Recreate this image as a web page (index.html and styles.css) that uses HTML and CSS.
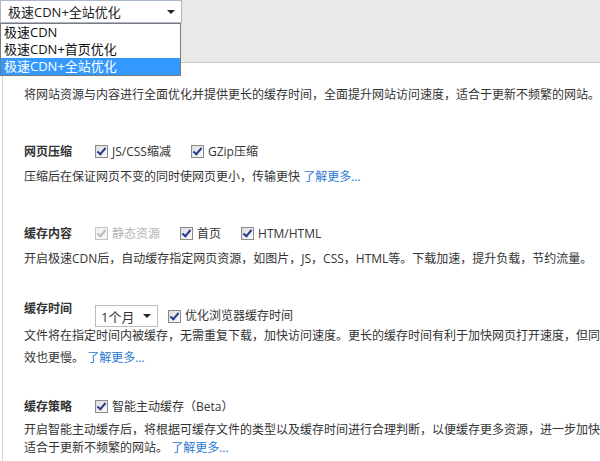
FILE: index.html
```html
<!DOCTYPE html>
<html lang="zh-CN">
<head>
    <meta charset="UTF-8">
    <title>极速CDN设置</title>
    <link rel="stylesheet" href="styles.css">
</head>
<body>
    <div class="topbar">
        <div class="select main-select">
            <span>极速CDN+全站优化</span>
            <span class="arrow"></span>
        </div>
        <ul class="dropdown">
            <li>极速CDN</li>
            <li>极速CDN+首页优化</li>
            <li class="active">极速CDN+全站优化</li>
        </ul>
    </div>

    <div class="content">
        <p class="intro">将网站资源与内容进行全面优化并提供更长的缓存时间，全面提升网站访问速度，适合于更新不频繁的网站。</p>

        <div class="section s-gzip">
            <div class="row">
                <span class="label">网页压缩</span>
                <span class="cb"></span><span class="opt">JS/CSS缩减</span>
                <span class="cb"></span><span class="opt">GZip压缩</span>
            </div>
            <p class="desc">压缩后在保证网页不变的同时使网页更小，传输更快 <a href="#">了解更多...</a></p>
        </div>

        <div class="section s-content">
            <div class="row">
                <span class="label">缓存内容</span>
                <span class="cb disabled"></span><span class="opt disabled">静态资源</span>
                <span class="cb"></span><span class="opt">首页</span>
                <span class="cb"></span><span class="opt">HTM/HTML</span>
            </div>
            <p class="desc">开启极速CDN后，自动缓存指定网页资源，如图片，JS，CSS，HTML等。下载加速，提升负载，节约流量。</p>
        </div>

        <div class="section s-time">
            <div class="row row-top">
                <span class="label">缓存时间</span>
                <div class="select small-select">
                    <span>1个月</span>
                    <span class="arrow"></span>
                </div>
                <span class="cb"></span><span class="opt">优化浏览器缓存时间</span>
            </div>
            <p class="desc tall">文件将在指定时间内被缓存，无需重复下载，加快访问速度。更长的缓存时间有利于加快网页打开速度，但同时更新生<br>效也更慢。 <a href="#">了解更多...</a></p>
        </div>

        <div class="section s-policy">
            <div class="row">
                <span class="label">缓存策略</span>
                <span class="cb"></span><span class="opt">智能主动缓存（Beta）</span>
            </div>
            <p class="desc short">开启智能主动缓存后，将根据可缓存文件的类型以及缓存时间进行合理判断，以便缓存更多资源，进一步加快网站访问速度，<br>适合于更新不频繁的网站。 <a href="#">了解更多...</a></p>
        </div>
    </div>
</body>
</html>
```

FILE: styles.css
```css
body {
    margin: 0;
    width: 600px;
    height: 461px;
    overflow: hidden;
    background: #fff;
    font-family: "Open Sans", "Noto Sans CJK SC", sans-serif;
    font-size: 12px;
    color: #333;
}

p {
    margin: 0;
    white-space: nowrap;
}

a {
    color: #2a78d2;
    text-decoration: none;
}

/* Top bar with dropdown */
.topbar {
    position: relative;
    height: 62px;
    background: #e9e9e9;
    border-bottom: 1px solid #c9c9c9;
}

.select {
    display: flex;
    align-items: center;
    justify-content: space-between;
    box-sizing: border-box;
    background: #fff;
    border: 1px solid #a9b7c9;
}

.main-select {
    width: 182px;
    height: 23px;
    padding: 0 6px 0 7px;
    font-size: 13px;
    color: #222;
}

.arrow {
    width: 0;
    height: 0;
    border-left: 4px solid transparent;
    border-right: 4px solid transparent;
    border-top: 4px solid #222;
}

.dropdown {
    position: absolute;
    top: 23px;
    left: 0;
    width: 181px;
    margin: 0;
    padding: 0;
    list-style: none;
    background: #fff;
    border: 1px solid #7a7a7a;
    box-sizing: border-box;
    font-size: 13px;
    color: #111;
}

.dropdown li {
    height: 17px;
    line-height: 17px;
    padding-left: 3px;
    overflow: hidden;
}

.dropdown li.active {
    background: #3399ff;
    color: #fff;
}

/* Content */
.content {
    margin-left: 2px;
    padding-left: 21px;
    border-left: 1px solid #d6d6d6;
    height: 400px;
}

.intro {
    line-height: 20px;
    padding-top: 22px;
}

.section {
    margin-top: 36px;
}

.s-time {
    margin-top: 30px;
}

.s-policy {
    margin-top: 27px;
}

.row {
    display: flex;
    align-items: center;
    height: 20px;
}

.row-top {
    align-items: flex-start;
    height: 26px;
}

.row-top .label {
    line-height: 20px;
}

.label {
    width: 71px;
    font-weight: bold;
    color: #333;
}

.opt {
    margin: 0 20px 0 4px;
    color: #333;
}

.opt.disabled {
    color: #b4b4b4;
}

.cb {
    width: 11px;
    height: 11px;
    border: 1px solid #8b8b8b;
    background: linear-gradient(135deg, #dcdcdc, #fbfbfb);
    position: relative;
}

.cb::after {
    content: '';
    position: absolute;
    left: 3px;
    top: 0;
    width: 3px;
    height: 7px;
    border-right: 2px solid #2a3a8c;
    border-bottom: 2px solid #2a3a8c;
    transform: rotate(40deg);
}

.cb.disabled {
    border-color: #c6c6c6;
    background: #f4f4f4;
}

.cb.disabled::after {
    border-color: #bcbcbc;
}

.small-select {
    width: 63px;
    height: 22px;
    margin: 6px 10px 0 0;
    padding: 0 6px 0 5px;
    border-color: #bcbcbc;
    font-size: 13px;
}

.row-top .cb {
    margin-top: 11px;
}

.row-top .opt {
    margin-top: 7px;
    line-height: 20px;
}

.desc {
    margin-top: 6px;
    line-height: 20px;
}

.desc.tall {
    margin-top: 0;
    line-height: 22px;
}

.desc.short {
    margin-top: 5px;
    line-height: 18px;
}
```
